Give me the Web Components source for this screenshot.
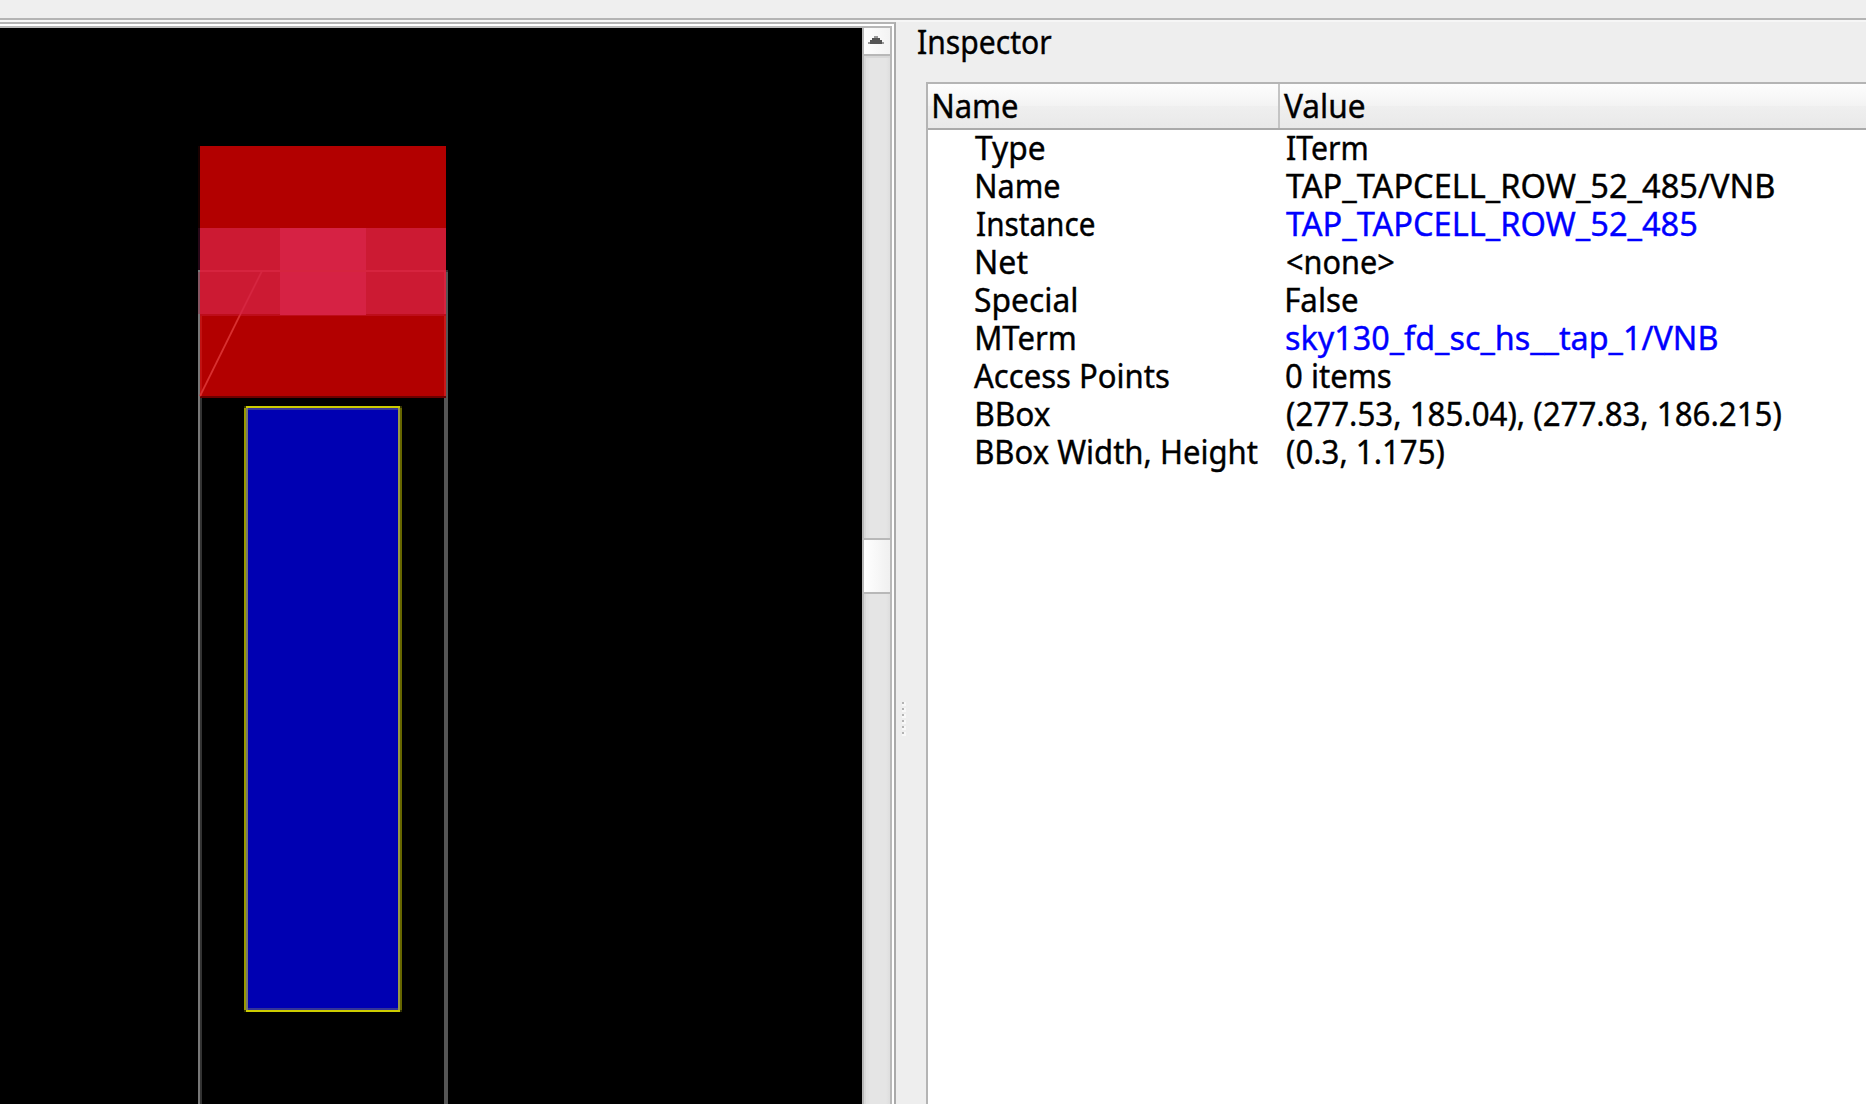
<!DOCTYPE html>
<html lang="en">
<head>
<meta charset="utf-8">
<title>Inspector</title>
<style>
html,body{margin:0;height:100%;overflow:hidden;background:#eee}
body{font-family:"Noto Sans","Open Sans",sans-serif;font-size:33px;color:#000}
</style>
</head>
<body>
<app-window>
  <layout-view slot="view"></layout-view>
  <scroll-bar slot="view"></scroll-bar>
  <inspector-panel slot="dock">
    <ui-label slot="title" w="134">Inspector</ui-label>
    <ui-label slot="name" x="1" w="83">Name</ui-label>
    <ui-label slot="value" w="80">Value</ui-label>
    <property-row><ui-label slot="n" w="69">Type</ui-label><ui-label slot="v" x="2" w="80">ITerm</ui-label></property-row>
    <property-row><ui-label slot="n" x="2" w="82">Name</ui-label><ui-label slot="v" x="1" w="488">TAP_TAPCELL_ROW_52_485/VNB</ui-label></property-row>
    <property-row link><ui-label slot="n" x="2" w="117">Instance</ui-label><ui-label slot="v" x="1" w="410">TAP_TAPCELL_ROW_52_485</ui-label></property-row>
    <property-row><ui-label slot="n" x="2" w="51">Net</ui-label><ui-label slot="v" x="2" w="107">&lt;none&gt;</ui-label></property-row>
    <property-row><ui-label slot="n" w="101">Special</ui-label><ui-label slot="v" x="2" w="70">False</ui-label></property-row>
    <property-row link><ui-label slot="n" x="2" w="98">MTerm</ui-label><ui-label slot="v" x="1" w="431">sky130_fd_sc_hs__tap_1/VNB</ui-label></property-row>
    <property-row><ui-label slot="n" x="-1" w="195">Access Points</ui-label><ui-label slot="v" x="1" w="105">0 items</ui-label></property-row>
    <property-row><ui-label slot="n" x="2" w="73">BBox</ui-label><ui-label slot="v" x="2" w="494">(277.53, 185.04), (277.83, 186.215)</ui-label></property-row>
    <property-row><ui-label slot="n" x="2" w="281">BBox Width, Height</ui-label><ui-label slot="v" x="2" w="157">(0.3, 1.175)</ui-label></property-row>
  </inspector-panel>
</app-window>
<script>
function define(name, html, ready){
  const t=document.createElement('template'); t.innerHTML=html;
  customElements.define(name, class extends HTMLElement{
    constructor(){super();this.attachShadow({mode:'open'}).append(t.content.cloneNode(true));}
    connectedCallback(){ if(ready) ready(this); }
  });
}

define('app-window', `<style>
:host{display:flex;flex-direction:column;width:100vw;height:100vh;background:#eee}
.bar{height:18px;flex:none;background:#efefef;border-bottom:2px solid #b4b4b4}
.main{flex:1;display:flex;min-height:0;border-top:2px solid #f6f6f6}
.view{width:894px;flex:none;display:flex;flex-direction:column;border-top:2px solid #b4b4b4;border-right:2px solid #aaa;background:#fff;padding-top:2px}
.in{flex:1;width:892px;display:flex;min-height:0;border-top:2px solid #b8b8b8}
.split{width:30px;flex:none;display:flex;flex-direction:column;align-items:flex-start;gap:4px;box-sizing:border-box;margin-right:-30px;padding:680px 0 0 6px}
.split i{width:2px;height:2px;background:#b4b4b4;box-shadow:2px 0 #f8f8f8,0 2px #f8f8f8,2px 2px #f8f8f8}
.dock{flex:1;display:flex;min-width:0}
::slotted(layout-view){flex:1}
</style>
<div class="bar"></div>
<div class="main"><div class="view"><div class="in"><slot name="view"></slot></div></div>
<div class="split"><i></i><i></i><i></i><i></i><i></i><i></i></div>
<div class="dock"><slot name="dock"></slot></div></div>`);

define('layout-view', `<style>
:host{display:block;background:#000;overflow:hidden}
svg{display:block}
</style>
<svg width="862" height="1076" viewBox="0 28 862 1076" shape-rendering="crispEdges">
<path fill="#777" d="M198 270h2v834h-2z"/><path fill="#333" d="M200 396h2v708h-2z"/><path fill="#555" d="M444 272h4v832h-4z"/>
<path fill="#333" d="M444 270h4v2h-4z"/>
<path fill="#b20000" d="M200 146h246v250H200z"/><path fill="#6a0000" d="M200 396h246v2H200z"/>
<path fill="#180000" d="M198 146h2v82h-2z"/><path fill="#280818" d="M198 228h2v42h-2z"/>
<path fill="#cc1a33" d="M200 228h246v86H200z"/><path fill="#be0d1a" d="M200 314h246v2H200z"/>
<path fill="#d62244" d="M280 228h86v87h-86z"/>
<path fill="#855561" d="M198 272h2v42h-2z"/>
<path fill="#d6243f" d="M200 270h246v2H200zM444 272h2v42h-2z"/>
<path fill="#c01212" d="M200 316h2v80h-2z"/><path fill="#ca1818" d="M444 316h2v80h-2z"/>
<g shape-rendering="auto" fill="none" stroke-width="1.7"><path stroke="#d93030" d="M200 396L240 315"/><path stroke="#d52640" d="M240 315L262 271"/></g>
<path fill="#0000b2" d="M246 408h154v602H246z"/>
<path fill="#343498" d="M246 408h154v2H246zM246 1008h154v2H246z"/>
<path fill="#999900" d="M244 408h2v602h-2z"/><path fill="#77776c" d="M246 408h2v602h-2z"/>
<path fill="#999942" d="M398 408h2v602h-2z"/><path fill="#666600" d="M400 408h2v602h-2z"/>
<path fill="#cccc00" d="M246 406h154v2H246zM246 1010h154v2H246z"/>
<path fill="#333300" d="M244 406h2v2h-2zM400 406h2v2h-2zM244 1010h2v2h-2zM400 1010h2v2h-2z"/>
</svg>`);

define('scroll-bar', `<style>
:host{display:flex;flex-direction:column;width:30px;box-sizing:border-box;border:solid #b8b8b8;border-width:0 2px;background:linear-gradient(90deg,#d8d8d8 0 2px,#e1e1e1 2px 4px,#e5e5e5 6px 22px,#dedede)}
.btn{height:26px;display:flex;background:linear-gradient(90deg,#fefefe,#f3f3f3);border-bottom:2px solid #b8b8b8}
.sp{height:482px;box-shadow:inset 0 2px #d8d8d8}
.th{height:52px;border:solid #b8b8b8;border-width:2px 0;background:linear-gradient(90deg,#fff,#f0f0f0)}
</style>
<div class="btn"><svg width="26" height="26" shape-rendering="crispEdges"><path fill="#999" d="M10 8h4v2h-4zM4 14h16v2H4z"/><path fill="#555" d="M8 10h8v2H8zM6 12h12v4H6z"/></svg></div>
<div class="sp"></div><div class="th"></div>`);

define('inspector-panel', `<style>
:host{flex:1;display:flex;flex-direction:column;min-width:0}
.title{height:60px;flex:none;padding:1px 0 0 22px;box-sizing:border-box}
.table{flex:1;margin-left:30px;border:solid #b4b4b4;border-width:2px 0 0 2px;background:#fff;display:flex;flex-direction:column;min-height:0}
.head{height:44px;flex:none;display:flex;border-bottom:2px solid #aaa;background:linear-gradient(#fdfdfd,#f3f3f3 50%,#efefef 50%,#e9e9e9)}
.c1,.c2{box-sizing:border-box;height:44px;padding:3px 0 0 5px}
.c1{width:352px;border-right:2px solid #c4c4c4}
.c2{padding-left:4px}
.rows{margin-top:-1px}
</style>
<div class="title"><slot name="title"></slot></div>
<div class="table"><div class="head"><div class="c1"><slot name="name"></slot></div><div class="c2"><slot name="value"></slot></div></div>
<div class="rows"><slot></slot></div></div>`);

define('property-row', `<style>
:host{display:flex;height:38px;padding-left:47px}
.n{width:310px;flex:none}
:host([link]) .v{color:#00f}
</style><div class="n"><slot name="n"></slot></div><div class="v"><slot name="v"></slot></div>`);

/* Label whose glyph ink starts at offset x and spans w pixels. */
const ctx=document.createElement('canvas').getContext('2d');
define('ui-label', `<style>
:host{display:block;line-height:38px;height:38px;white-space:pre}
span{display:inline-block;transform-origin:0 0;-webkit-text-stroke:.4px currentColor}
</style><span><slot></slot></span>`, el=>{
  ctx.font='33px "Noto Sans","Open Sans",sans-serif';
  const m=ctx.measureText(el.textContent);
  const s=+el.getAttribute('w')/(m.actualBoundingBoxLeft+m.actualBoundingBoxRight);
  const x=+(el.getAttribute('x')||0)+m.actualBoundingBoxLeft*s;
  el.shadowRoot.querySelector('span').style.transform='translateX('+x+'px) scaleX('+s+')';
});
</script>
</body>
</html>
